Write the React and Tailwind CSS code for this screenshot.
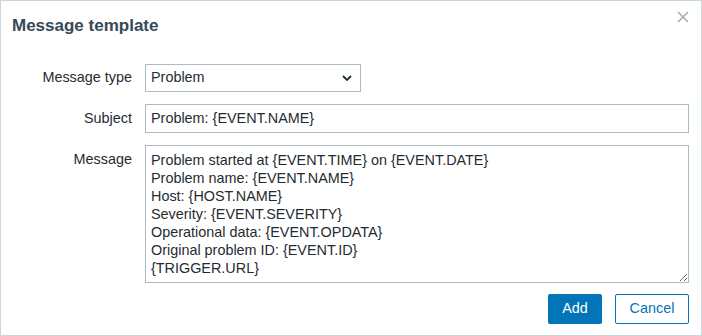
import React from "react";

const font = { fontFamily: '"Liberation Sans", Arial, sans-serif' };

export default function App() {
  const msg =
    "Problem started at {EVENT.TIME} on {EVENT.DATE}\nProblem name: {EVENT.NAME}\nHost: {HOST.NAME}\nSeverity: {EVENT.SEVERITY}\nOperational data: {EVENT.OPDATA}\nOriginal problem ID: {EVENT.ID}\n{TRIGGER.URL}";
  return (
    <div
      className="relative w-[702px] h-[336px] bg-white border border-[#ccd5d9] text-[#1f2c33] overflow-hidden"
      style={font}
    >
      <div className="pl-[11px] pt-[15px] h-[50px]">
        <h1 className="text-[17px] font-bold text-[#364956] leading-[20px]">
          Message template
        </h1>
      </div>
      <button className="absolute right-[12px] top-[10px] w-[12px] h-[12px] text-[#a3aeb5]">
        <svg viewBox="0 0 12 12" className="w-[12px] h-[12px]" fill="none" stroke="currentColor" strokeWidth="1.6">
          <path d="M1 1L11 11M11 1L1 11" />
        </svg>
      </button>
      <div className="grid grid-cols-[131px_1fr] gap-x-[13px] gap-y-[12px] mt-[13px] pr-[12px] text-[14.4px]">
        <div className="flex items-center justify-end">Message type</div>
        <div className="w-[216px] h-[28px] border border-[#acbbc2] flex items-center justify-between pl-[5px] pr-[8px]">
          <span>Problem</span>
          <svg viewBox="0 0 10 6" className="w-[10px] h-[6px]" fill="none" stroke="#1f2c33" strokeWidth="1.8">
            <path d="M1 1L5 5L9 1" />
          </svg>
        </div>
        <div className="flex items-center justify-end">Subject</div>
        <div className="h-[29px] border border-[#acbbc2] flex items-center pl-[5px]">
          Problem: {"{EVENT.NAME}"}
        </div>
        <div className="flex justify-end pt-[6px] leading-[17px]">Message</div>
        <textarea
          readOnly
          value={msg}
          className="h-[138px] border border-[#acbbc2] px-[5px] pt-[5px] leading-[18px] text-[14.4px] text-[#1f2c33] outline-none resize overflow-hidden"
          style={font}
        />
      </div>
      <div className="flex justify-end gap-[13px] pr-[12px] mt-[11px] text-[14.4px]">
        <button className="w-[54px] h-[30px] bg-[#0275b8] text-white rounded-[2px]" style={font}>
          Add
        </button>
        <button className="w-[74px] h-[30px] border border-[#0275b8] text-[#0275b8] rounded-[2px] bg-white" style={font}>
          Cancel
        </button>
      </div>
    </div>
  );
}
